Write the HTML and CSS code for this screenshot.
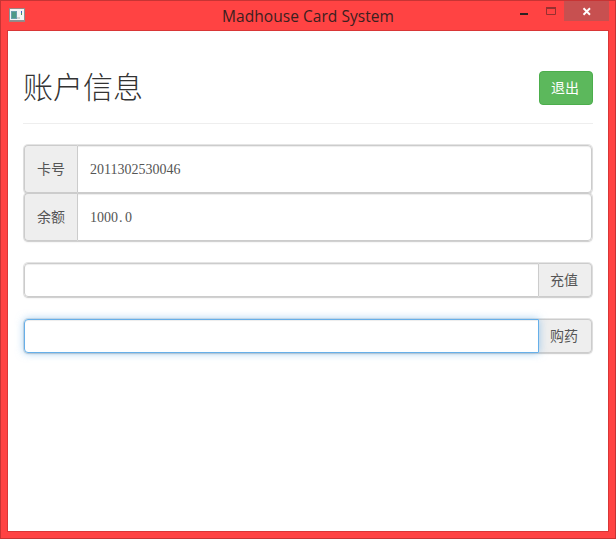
FILE: index.html
```html
<!DOCTYPE html>
<html lang="zh-CN">
<head>
<meta charset="utf-8">
<title>Madhouse Card System</title>
<link rel="stylesheet" href="styles.css">
</head>
<body>
<div class="window">
  <header class="titlebar">
    <svg class="app-icon" width="16" height="14" viewBox="0 0 16 14" shape-rendering="crispEdges">
      <rect width="16" height="14" fill="#9a8583"/>
      <rect y="1" width="16" height="12" fill="#8b9294"/>
      <rect x="1" y="1" width="14" height="11" fill="#f4f4f4"/>
      <rect x="2" y="3" width="6" height="8" fill="#6a9fae"/>
      <rect x="3" y="4" width="4" height="6" fill="#4f9a86"/>
      <rect x="12" y="3" width="1" height="2" fill="#3b63c4"/>
      <rect x="12" y="5" width="1" height="2" fill="#4b9a62"/>
      <rect x="8" y="9" width="3" height="2" fill="#cfcfcf"/>
    </svg>
    <span class="title">Madhouse Card System</span>
    <div class="controls">
      <svg width="108" height="20" viewBox="0 0 108 20">
        <rect x="63" width="45" height="20" fill="#c75050"/>
        <rect x="19" y="12" width="8" height="2" fill="#2b2222"/>
        <path d="M45.500 7v6.500h9V7" fill="none" stroke="#963030"/>
        <path d="M45 7h10" stroke="#963030" stroke-width="2"/>
        <path d="M82.500 7.300L89 13.700M89 7.300L82.500 13.700" stroke="#fff" stroke-width="1.900"/>
      </svg>
    </div>
  </header>
  <main class="content">
    <div class="page-header">
      <h1>账户信息</h1>
      <button class="btn">退出</button>
    </div>
    <div class="group info">
      <span class="addon first">卡号</span>
      <span class="control">2011302530046</span>
    </div>
    <div class="group info">
      <span class="addon first">余额</span>
      <span class="control">1000<span class="dot">.</span>0</span>
    </div>
    <div class="group field">
      <input class="control" type="text">
      <span class="addon last">充值</span>
    </div>
    <div class="group field">
      <input class="control focused" type="text">
      <span class="addon last">购药</span>
    </div>
  </main>
</div>
</body>
</html>
```

FILE: styles.css
```css
* { box-sizing: border-box; }
body {
  margin: 0;
  font-family: "Liberation Serif", "Noto Sans CJK SC", sans-serif;
  font-size: 14px;
  font-weight: 300;
  color: #333;
}
.window {
  width: 616px;
  height: 539px;
  display: flex;
  flex-direction: column;
  padding: 0 6px 6px;
  background: #ff4343;
  border: 1px solid #c73434;
}
.titlebar {
  height: 29px;
  flex: none;
  display: grid;
  grid-template-columns: 108px 1fr 108px;
  margin: 0 0 0 2px;
}
.app-icon { margin-top: 7px; }
.title {
  text-align: center;
  font: 400 15.500px/30px "Open Sans", sans-serif;
  letter-spacing: .05px;
  margin-left: -2px;
  color: #3b2020;
  white-space: nowrap;
}
.controls svg { display: block; }
.content {
  flex: 1;
  padding: 40px 15px 0;
  background: #fff;
  border: 1px solid #d93636;
}
.page-header {
  height: 53px;
  display: flex;
  justify-content: space-between;
  align-items: flex-start;
  border-bottom: 1px solid #eee;
  margin-bottom: 21px;
}
h1 {
  margin: 0;
  font-size: 30px;
  font-weight: 300;
  line-height: 33px;
}
.btn {
  width: 54px;
  height: 34px;
  padding: 0 2px 2px 0;
  border: 1px solid #4cae4c;
  border-radius: 4px;
  background: #5cb85c;
  color: #fff;
  font: inherit;
  font-weight: 400;
}
.group {
  display: flex;
  margin: 0 1px;
  border-radius: 4px;
  box-shadow: 0 0 0 1px rgba(0, 0, 0, .1), 0 1px 2px rgba(0, 0, 0, .12);
}
.info { height: 48px; }
.field { height: 34px; margin-top: 22px; }
.addon {
  display: flex;
  align-items: center;
  justify-content: center;
  width: 54px;
  padding-bottom: 2px;
  background: #eee;
  border: 1px solid #ccc;
  color: #555;
  font-weight: 400;
}
.first { border-right: 0; border-radius: 4px 0 0 4px; width: 53px; }
.last { border-left: 0; border-radius: 0 4px 4px 0; width: 53px; padding-right: 2px; }
.control {
  flex: 1;
  min-width: 0;
  display: flex;
  align-items: center;
  padding: 1px 12px 0;
  background: #fff;
  border: 1px solid #ccc;
  border-radius: 0 4px 4px 0;
  box-shadow: inset 0 1px 1px rgba(0, 0, 0, .075);
  color: #555;
  font: inherit;
}
.field .control { border-radius: 4px 0 0 4px; }
.field .focused {
  z-index: 1;
  border-color: #66afe9;
  box-shadow: inset 0 1px 1px rgba(0, 0, 0, .075), 0 0 8px rgba(102, 175, 233, .6);
}
.dot { width: 7px; padding-left: 1px; }
```
